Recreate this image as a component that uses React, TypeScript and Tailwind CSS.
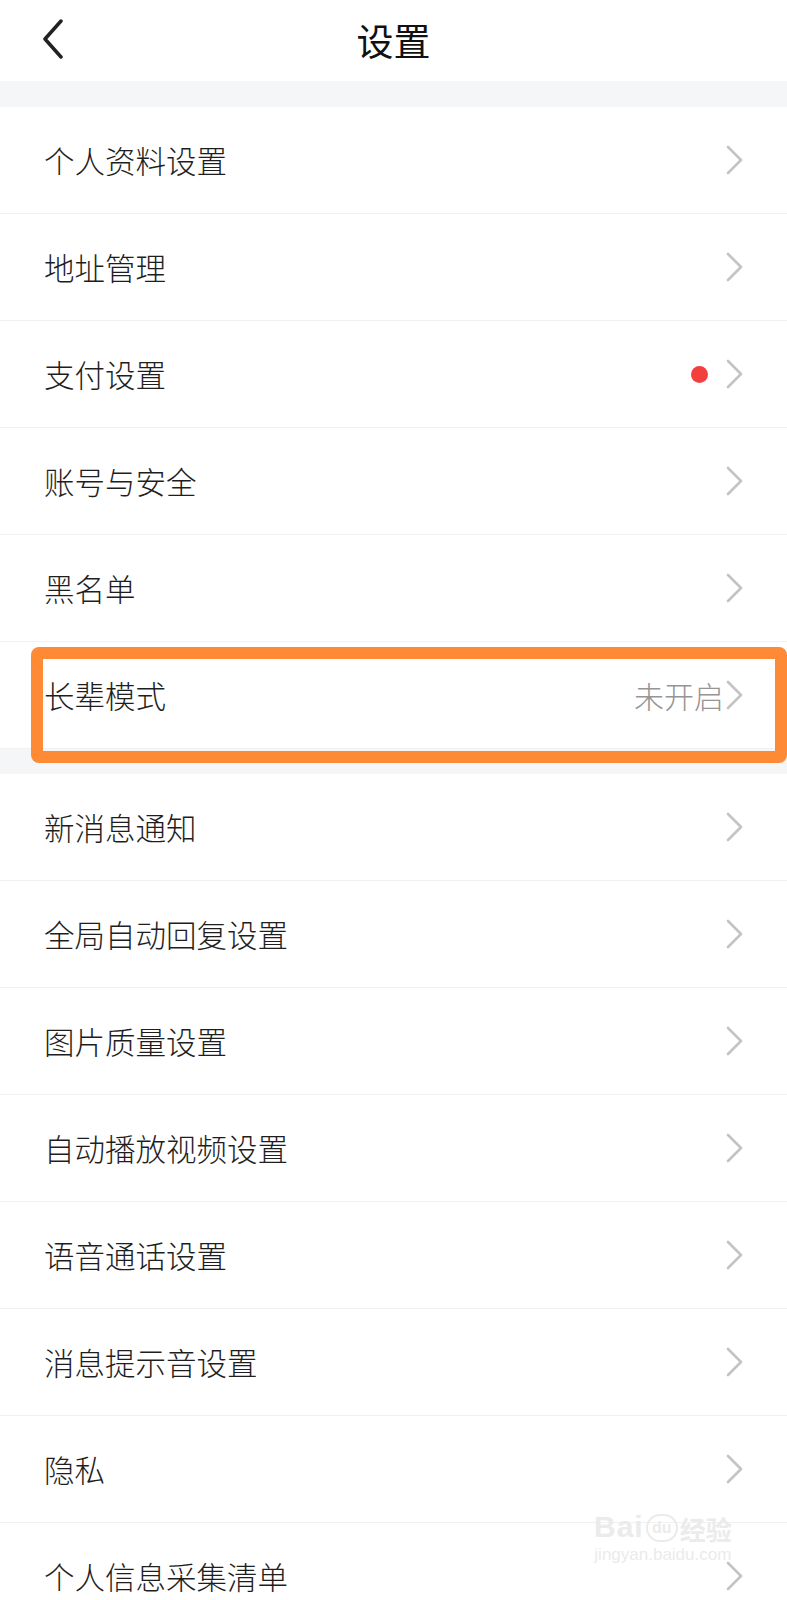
import React from "react";

type Row = {
  label: string;
  value?: string;
  dot?: boolean;
};

const groupOne: Row[] = [
  { label: "个人资料设置" },
  { label: "地址管理" },
  { label: "支付设置", dot: true },
  { label: "账号与安全" },
  { label: "黑名单" },
  { label: "长辈模式", value: "未开启" },
];

const groupTwo: Row[] = [
  { label: "新消息通知" },
  { label: "全局自动回复设置" },
  { label: "图片质量设置" },
  { label: "自动播放视频设置" },
  { label: "语音通话设置" },
  { label: "消息提示音设置" },
  { label: "隐私" },
  { label: "个人信息采集清单" },
];

const font = "font-['Noto_Sans_CJK_SC','Noto_Sans',sans-serif]";

function Chevron() {
  return (
    <svg width="17" height="30" viewBox="0 0 17 30" fill="none" className="shrink-0">
      <path d="M2 2 L15 15 L2 28" stroke="#c4c4c4" strokeWidth="2.7" strokeLinecap="round" strokeLinejoin="round" />
    </svg>
  );
}

function SettingRow({ label, value, dot }: Row) {
  return (
    <div className="flex h-[107px] items-center border-b border-[#f1f1f3] bg-white pl-[44px] pr-[44px]">
      <span className="flex-1 text-[30.5px] font-light leading-none text-[#1e1e1e]">{label}</span>
      {dot ? <span className="mr-[18px] h-[17px] w-[17px] rounded-full bg-[#f2403f]" /> : null}
      {value ? <span className="mr-[2px] text-[30px] font-light leading-none text-[#959595]">{value}</span> : null}
      <Chevron />
    </div>
  );
}

export default function App() {
  return (
    <div className={`relative h-[1600px] w-[787px] overflow-hidden bg-white ${font}`}>
      {/* header */}
      <div className="relative flex h-[81px] items-center justify-center bg-white">
        <svg width="22" height="40" viewBox="0 0 22 40" fill="none" className="absolute left-[42px] top-[19px]">
          <path d="M19 2 L3 20 L19 38" stroke="#222222" strokeWidth="3.5" strokeLinecap="round" strokeLinejoin="round" />
        </svg>
        <h1 className="text-[37px] font-normal leading-none text-[#111111]">设置</h1>
      </div>

      <div className="h-[26px] bg-[#f5f6f8]" />
      <div>
        {groupOne.map((r) => (
          <SettingRow key={r.label} {...r} />
        ))}
      </div>
      <div className="h-[25px] bg-[#f5f6f8]" />
      <div>
        {groupTwo.map((r) => (
          <SettingRow key={r.label} {...r} />
        ))}
      </div>

      {/* highlight annotation */}
      <div className="absolute left-[31px] top-[647px] h-[116px] w-[756px] rounded-[8px] border-[12px] border-[#ff8a36]" />

      {/* watermark */}
      <div className="pointer-events-none absolute left-[594px] top-[1512px] flex flex-col items-center">
        <div className="flex items-end gap-[2px] text-[#ebebeb]">
          <span className="font-['Liberation_Sans',sans-serif] text-[30px] font-bold leading-none tracking-[1px]">Bai</span>
          <span className="flex h-[28px] w-[32px] items-center justify-center rounded-full border-[2px] border-[#ebebeb] font-['Liberation_Sans',sans-serif] text-[16px] font-bold leading-none">du</span>
          <span className="text-[26px] font-bold leading-none">经验</span>
        </div>
        <span className="mt-[4px] font-['Liberation_Sans',sans-serif] text-[17px] leading-none text-[#ebebeb]">jingyan.baidu.com</span>
      </div>
    </div>
  );
}
